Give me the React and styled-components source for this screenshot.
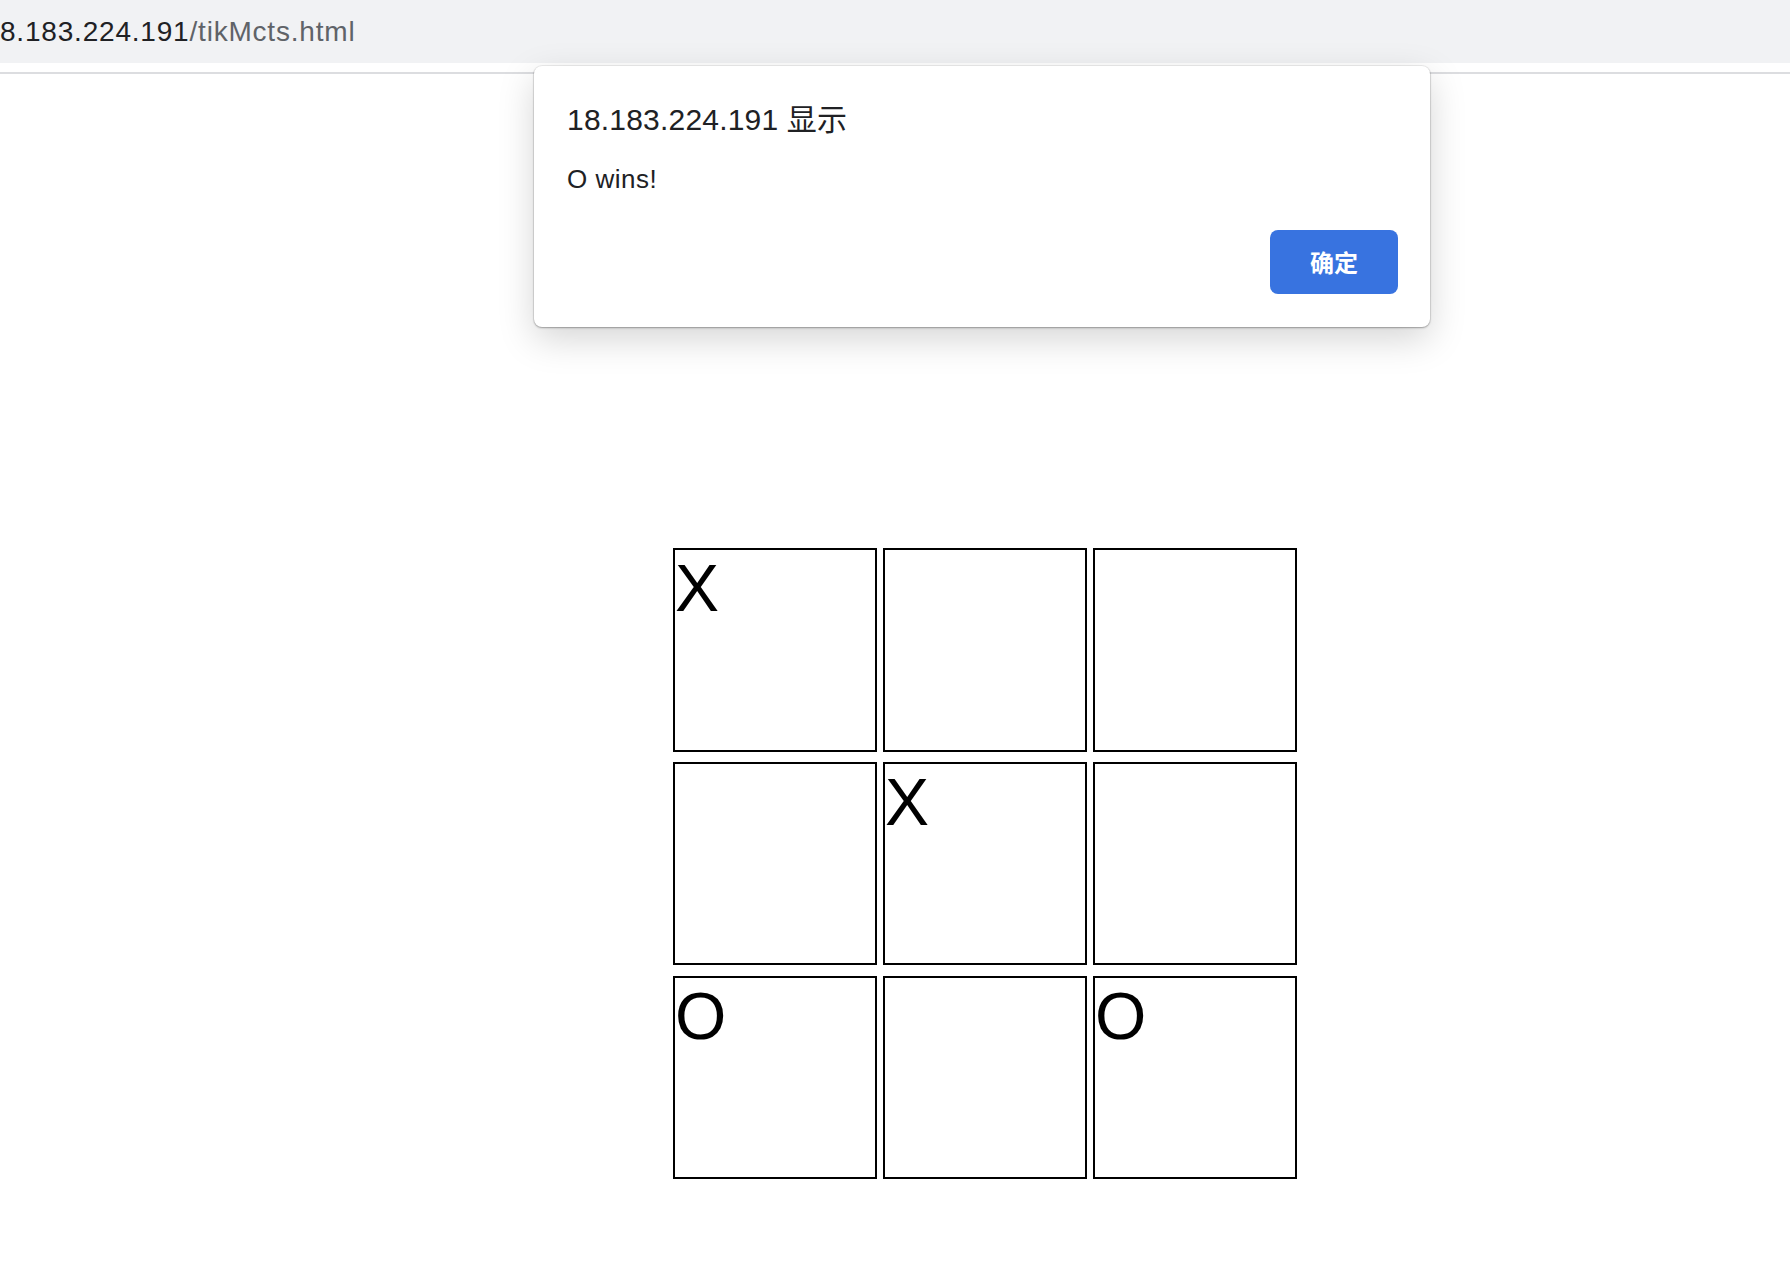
import React from 'react';
import styled, { createGlobalStyle } from 'styled-components';

const board = ['X', '', '', '', 'X', '', 'O', '', 'O'];

const GlobalStyle = createGlobalStyle`
  html, body {
    margin: 0;
    padding: 0;
    background: #ffffff;
  }
  body {
    font-family: 'Liberation Sans', 'Noto Sans CJK SC', sans-serif;
  }
`;

const Page = styled.div`
  position: relative;
  width: 1790px;
  height: 1274px;
  overflow: hidden;
  background: #ffffff;
`;

const AddressBar = styled.div`
  height: 63px;
  line-height: 63px;
  background: #f1f2f4;
  font-size: 28px;
  letter-spacing: 0.8px;
  white-space: nowrap;
  border-bottom: 9px solid #ffffff;
  box-shadow: 0 2px 0 #dcdde0;
`;

const Host = styled.span`
  color: #202124;
`;

const Path = styled.span`
  color: #5f6368;
`;

const Board = styled.div`
  display: grid;
  grid-template-columns: repeat(3, 204px);
  grid-auto-rows: 203.5px;
  column-gap: 6px;
  row-gap: 10.3px;
  margin: 476px 0 0 673px;
  width: fit-content;
`;

const Cell = styled.div`
  box-sizing: border-box;
  border: 2px solid #000000;
  font-family: 'Liberation Sans', Arial, sans-serif;
  font-size: 66px;
  line-height: normal;
  color: #000000;
`;

const Dialog = styled.div`
  position: absolute;
  top: 66px;
  left: 534px;
  width: 896px;
  box-sizing: border-box;
  padding: 36px 32px 33px 33px;
  background: #ffffff;
  border-radius: 8px;
  box-shadow: 0 0 0 1px rgba(0, 0, 0, 0.06), 0 1px 2px rgba(0, 0, 0, 0.3),
    0 12px 36px rgba(0, 0, 0, 0.17);
`;

const Title = styled.div`
  font-family: 'Liberation Sans', 'Noto Sans CJK SC', sans-serif;
  font-size: 30px;
  line-height: 36px;
  letter-spacing: 0.2px;
  color: #202124;
`;

const Message = styled.div`
  margin-top: 26px;
  font-size: 26px;
  line-height: 30px;
  letter-spacing: 0.5px;
  color: #202124;
`;

const Actions = styled.div`
  display: flex;
  justify-content: flex-end;
  margin-top: 36px;
`;

const OkButton = styled.button`
  width: 128px;
  height: 64px;
  border: none;
  border-radius: 8px;
  background: #3873e0;
  color: #ffffff;
  font-family: 'Noto Sans CJK SC', sans-serif;
  font-size: 24px;
  font-weight: 700;
  padding: 0 0 2px;
`;

export default function App() {
  return (
    <Page>
      <GlobalStyle />
      <AddressBar>
        <Host>8.183.224.191</Host>
        <Path>/tikMcts.html</Path>
      </AddressBar>
      <Board>
        {board.map((v, i) => (
          <Cell key={i}>{v}</Cell>
        ))}
      </Board>
      <Dialog>
        <Title>18.183.224.191 显示</Title>
        <Message>O wins!</Message>
        <Actions>
          <OkButton>确定</OkButton>
        </Actions>
      </Dialog>
    </Page>
  );
}
